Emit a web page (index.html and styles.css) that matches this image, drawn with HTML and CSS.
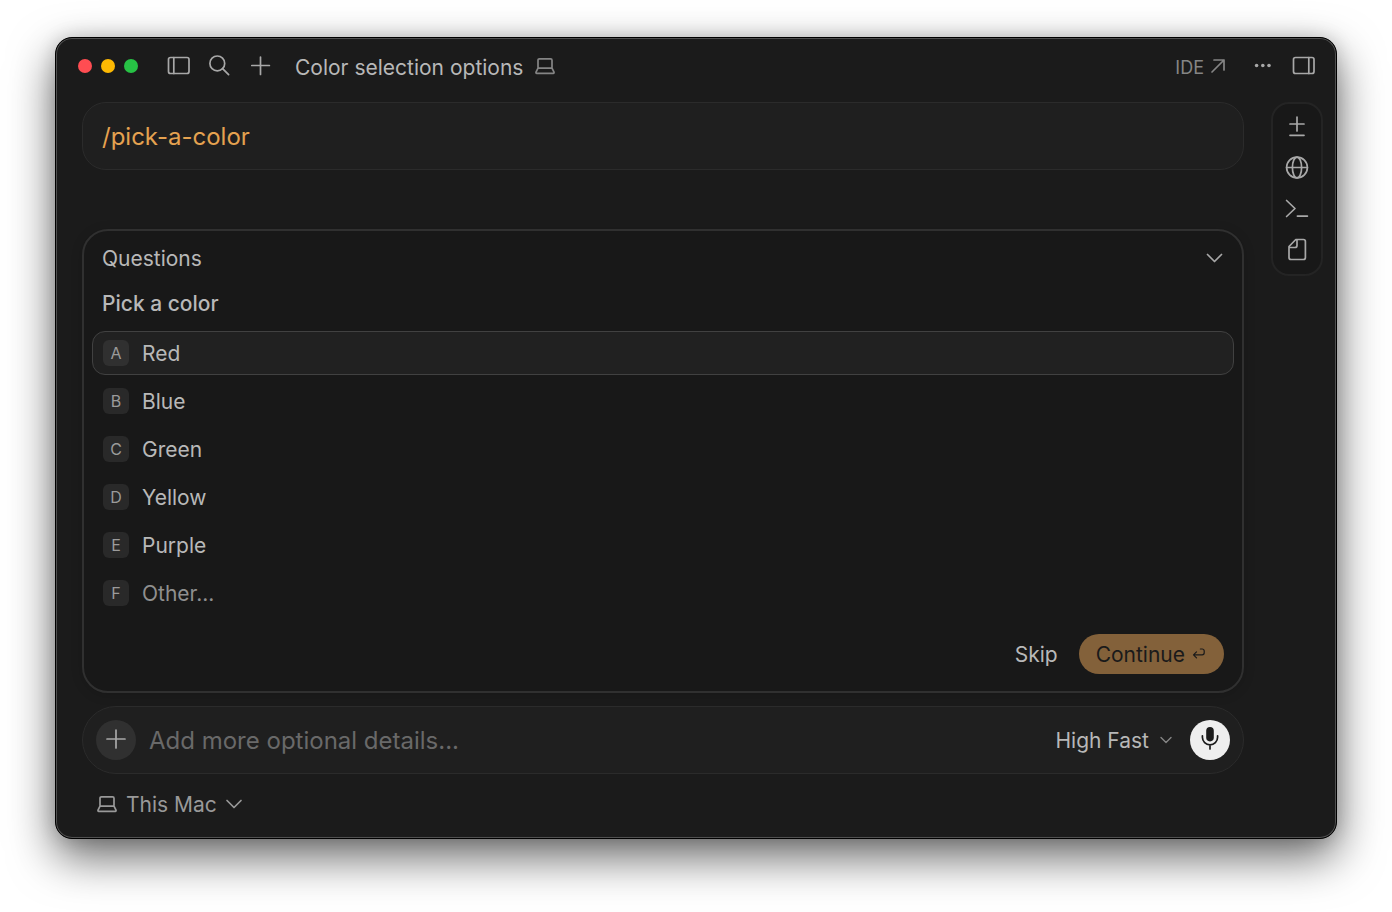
FILE: index.html
```html
<!DOCTYPE html>
<html lang="en">
<head>
    <meta charset="UTF-8">
    <meta name="viewport" content="width=device-width, initial-scale=1.0">
    <title>Color selection options</title>
    <link rel="stylesheet" href="styles.css">
</head>
<body>

    <div class="window">
        <header class="titlebar">
            <div class="lights">
                <button class="light red" aria-label="Close"></button>
                <button class="light yellow" aria-label="Minimize"></button>
                <button class="light green" aria-label="Zoom"></button>
            </div>
            <div class="tools">
                <button class="icon-btn" aria-label="Toggle sidebar">
                    <svg width="24" height="24" viewBox="0 0 24 24"><rect x="1.5" y="3.5" width="20.5" height="16" rx="2"/><path d="M6.8 3.5v16"/></svg>
                </button>
                <button class="icon-btn" aria-label="Search">
                    <svg width="24" height="24" viewBox="0 0 24 24"><circle cx="9.3" cy="9.4" r="7.4"/><path d="M14.6 14.7l6 6"/></svg>
                </button>
                <button class="icon-btn" aria-label="New chat">
                    <svg width="24" height="24" viewBox="0 0 24 24"><path d="M11.5 3v17.5M2.8 11.5h17.6"/></svg>
                </button>
            </div>
            <h1>Color selection options</h1>
            <svg class="laptop" width="20" height="20" viewBox="0 0 20 20"><path d="M3 11.5V4.2a1.4 1.4 0 0 1 1.4-1.4h11.2A1.4 1.4 0 0 1 17 4.2v7.3M3 12.2h14M3 12.2L1 16.2a.8.8 0 0 0 .7 1.1h16.6a.8.8 0 0 0 .7-1.1l-2-4"/></svg>
            <div class="titlebar-right">
                <a class="ide-link" href="#"><span>IDE</span>
                    <svg width="16" height="16" viewBox="0 0 16 16"><path d="M2 14L14 2M4 2h10v10"/></svg>
                </a>
                <button class="icon-btn" aria-label="More">
                    <svg class="dots" width="24" height="24" viewBox="0 0 24 24"><circle cx="5.6" cy="11.5" r="1.8"/><circle cx="11.8" cy="11.5" r="1.8"/><circle cx="18" cy="11.5" r="1.8"/></svg>
                </button>
                <button class="icon-btn" aria-label="Toggle panel">
                    <svg width="24" height="24" viewBox="0 0 24 24"><rect x="1.5" y="3.5" width="20.5" height="16" rx="2"/><path d="M16.8 3.5v16"/></svg>
                </button>
            </div>
        </header>

        <div class="content">
            <main>
                <div class="prompt">/pick-a-color</div>

                <form class="questions">
                    <div class="questions-head">
                        <h2>Questions</h2>
                        <button type="button" class="icon-btn" aria-label="Collapse">
                            <svg width="18" height="18" viewBox="0 0 18 18"><path d="M1.5 5.5l7 7 7-7"/></svg>
                        </button>
                    </div>
                    <h3>Pick a color</h3>
                    <div class="options">
                        <label class="option"><input type="radio" name="color" value="red" checked><span class="key">A</span>Red</label>
                        <label class="option"><input type="radio" name="color" value="blue"><span class="key">B</span>Blue</label>
                        <label class="option"><input type="radio" name="color" value="green"><span class="key">C</span>Green</label>
                        <label class="option"><input type="radio" name="color" value="yellow"><span class="key">D</span>Yellow</label>
                        <label class="option"><input type="radio" name="color" value="purple"><span class="key">E</span>Purple</label>
                        <label class="option other"><input type="radio" name="color" value="other"><span class="key">F</span>Other...</label>
                    </div>
                    <div class="actions">
                        <button type="button" class="skip">Skip</button>
                        <button type="submit" class="continue">Continue
                            <svg width="14" height="14" viewBox="0 0 14 14"><path d="M4.5 4.8L1.5 7.8l3 3M1.8 7.8h8.4a2 2 0 0 0 2-2V4a2 2 0 0 0-2-2H8.4"/></svg>
                        </button>
                    </div>
                </form>

                <div class="composer">
                    <button class="add" aria-label="Add attachment">
                        <svg width="24" height="24" viewBox="0 0 24 24"><path d="M12 2v18M3 11h18"/></svg>
                    </button>
                    <input type="text" aria-label="Details" placeholder="Add more optional details...">
                    <div class="picker model">
                        <select aria-label="Model">
                            <option>High Fast</option>
                        </select>
                        <svg width="14" height="14" viewBox="0 0 14 14"><path d="M2 4.5l5 5 5-5"/></svg>
                    </div>
                    <button class="mic" aria-label="Dictate">
                        <svg width="24" height="24" viewBox="0 0 24 24"><rect class="solid" x="8.2" y="-1" width="7.6" height="14.4" rx="3.8"/><path d="M4.4 7.8v1.4a7.6 7.6 0 0 0 15.2 0V7.8M12 17v4"/></svg>
                    </button>
                </div>

                <div class="picker location">
                    <svg class="laptop" width="20" height="20" viewBox="0 0 20 20"><path d="M3 10.5V3.2a1.4 1.4 0 0 1 1.4-1.4h11.2A1.4 1.4 0 0 1 17 3.2v7.3M3 11.2h14M3 11.2L1 15.2a.8.8 0 0 0 .7 1.1h16.6a.8.8 0 0 0 .7-1.1l-2-4"/></svg>
                    <select aria-label="Run on">
                        <option>This Mac</option>
                    </select>
                    <svg width="18" height="18" viewBox="0 0 18 18"><path d="M1 4.5l7 7 7-7"/></svg>
                </div>
            </main>

            <nav class="rail">
                <button class="icon-btn" aria-label="Changes">
                    <svg width="24" height="24" viewBox="0 0 24 24"><path d="M12 3v14M5 10h14M5 21.3h14"/></svg>
                </button>
                <button class="icon-btn" aria-label="Browser">
                    <svg width="24" height="24" viewBox="0 0 24 24"><circle cx="12" cy="12.5" r="10.4"/><ellipse cx="12" cy="12.5" rx="4.6" ry="10.4"/><path d="M1.6 12.5h20.8"/></svg>
                </button>
                <button class="icon-btn" aria-label="Terminal">
                    <svg width="24" height="24" viewBox="0 0 24 24"><path d="M1.6 4.5l8.4 8-8.4 8M12.4 20.1h10"/></svg>
                </button>
                <button class="icon-btn" aria-label="Files">
                    <svg width="24" height="24" viewBox="0 0 24 24"><path d="M10.8 2.5h7.6a2 2 0 0 1 2 2v16a2 2 0 0 1-2 2H6a2 2 0 0 1-2-2v-11zM12 2.5v6a2 2 0 0 1-2 2H4"/></svg>
                </button>
            </nav>
        </div>
    </div>

</body>
</html>
```
FILE: styles.css
```css
* {
    box-sizing: border-box;
}
body {
    margin: 0;
    padding: 37px 55px 73px;
    min-height: 100vh;
    display: flex;
    background-color: #fff;
    color: #b8b8b8;
    font-family: Inter, "Liberation Sans", sans-serif;
    font-size: 21px;
    line-height: 29px;
}
h1, h2, h3 {
    margin: 0;
    font-size: 21px;
    font-weight: 400;
}
button, input, select {
    margin: 0;
    padding: 0;
    border: none;
    background: none;
    color: inherit;
    font: inherit;
}
button {
    cursor: pointer;
}
svg {
    display: block;
    flex: none;
    overflow: visible;
    fill: none;
    stroke: currentColor;
    stroke-width: 1.7;
    stroke-linecap: round;
    stroke-linejoin: round;
}
.window {
    flex: 1;
    display: flex;
    flex-direction: column;
    border: 1px solid #000;
    border-radius: 17px;
    background-color: #1b1b1b;
    box-shadow: inset 0 0 0 1px #505050, 0 18px 46px rgba(0, 0, 0, 0.6), 0 0 18px rgba(0, 0, 0, 0.15);
}

/* Title bar */
.titlebar {
    height: 64px;
    padding: 0 20px 8px 22px;
    display: flex;
    align-items: center;
}
.lights {
    display: flex;
    gap: 9px;
}
.light {
    width: 14px;
    height: 14px;
    border-radius: 50%;
}
.red {
    background-color: #ff4d52;
}
.yellow {
    background-color: #fdb903;
}
.green {
    background-color: #27c245;
}
.tools {
    display: flex;
    gap: 17px;
    margin: 0 22px 0 29px;
}
.icon-btn {
    color: #a8a8a8;
}
h1 {
    padding-top: 2px;
}
.titlebar .laptop {
    margin-left: 12px;
    color: #858585;
}
.titlebar-right {
    margin-left: auto;
    display: flex;
    align-items: center;
    gap: 17px;
}
.ide-link {
    display: flex;
    align-items: center;
    gap: 6px;
    margin-right: 8px;
    color: #858585;
    font-size: 18px;
    text-decoration: none;
}
.ide-link span {
    padding-top: 2px;
}
.dots {
    fill: currentColor;
    stroke: none;
}

/* Main area */
.content {
    flex: 1;
    display: flex;
    align-items: flex-start;
    gap: 27px;
    padding: 0 13px 0 26px;
}
main {
    flex: 1;
}
.prompt {
    height: 68px;
    padding: 0 19px;
    display: flex;
    align-items: center;
    border: 1px solid #2b2b2b;
    border-radius: 24px;
    background-color: #1f1f1f;
    color: #e5a250;
    font-size: 24px;
}
.questions {
    margin-top: 59px;
    padding: 0 8px 17px;
    border: 2px solid #303030;
    border-radius: 26px;
    background-color: #181818;
    box-shadow: 0 2px 12px rgba(0, 0, 0, 0.15);
}
.questions-head {
    height: 54px;
    padding: 0 10px;
    display: flex;
    align-items: center;
    justify-content: space-between;
}
h3 {
    padding: 4px 10px 13px;
    font-weight: 500;
}
.options {
    display: flex;
    flex-direction: column;
    gap: 4px;
}
.option {
    position: relative;
    height: 44px;
    padding: 0 10px;
    display: flex;
    align-items: center;
    gap: 13px;
    border: 1px solid transparent;
    border-radius: 13px;
    cursor: pointer;
}
.option input {
    position: absolute;
    opacity: 0;
}
.option:has(input:checked) {
    border-color: #414141;
    background-color: #212121;
}
.option:has(input:checked) .key {
    background-color: #303030;
}
.other {
    color: #8f8f8f;
}
.key {
    width: 26px;
    height: 26px;
    border-radius: 6px;
    background-color: #292929;
    color: #9b9b9b;
    font-size: 16px;
    line-height: 26px;
    text-align: center;
}
.actions {
    display: flex;
    justify-content: flex-end;
    align-items: center;
    gap: 21px;
    padding: 19px 10px 0;
}
.continue {
    height: 40px;
    padding: 0 18px 0 17px;
    display: flex;
    align-items: center;
    gap: 7px;
    border-radius: 20px;
    background-color: #83613a;
    color: #1a1a1a;
}
.continue svg {
    stroke-width: 1.2;
}

/* Composer */
.composer {
    height: 68px;
    margin-top: 13px;
    padding: 0 13px;
    display: flex;
    align-items: center;
    border: 1px solid #2b2b2b;
    border-radius: 34px;
    background-color: #1f1f1f;
}
.add, .mic {
    flex: none;
    width: 40px;
    height: 40px;
    display: flex;
    align-items: center;
    justify-content: center;
    border-radius: 50%;
}
.add {
    background-color: #303030;
}
.add svg {
    color: #a8a8a8;
}
.mic {
    margin-left: 17px;
    background-color: #eee;
    color: #1b1b1b;
}
.solid {
    fill: currentColor;
    stroke: none;
}
.composer input {
    flex: 1;
    min-width: 0;
    margin-left: 13px;
    outline: none;
    font-size: 24px;
}
.composer input::placeholder {
    color: #696969;
}
.picker {
    display: flex;
    align-items: center;
}
.picker select {
    appearance: none;
    field-sizing: content;
    outline: none;
    cursor: pointer;
}
.model {
    gap: 10px;
}
.model svg {
    color: #858585;
    stroke-width: 1.4;
}
.location {
    gap: 9px;
    padding: 16px 15px;
    color: #999;
}

/* Right rail */
.rail {
    width: 52px;
    padding: 10px 0 13px;
    display: flex;
    flex-direction: column;
    align-items: center;
    gap: 17px;
    border: 2px solid #242424;
    border-radius: 18px;
    background-color: #181818;
}
```
